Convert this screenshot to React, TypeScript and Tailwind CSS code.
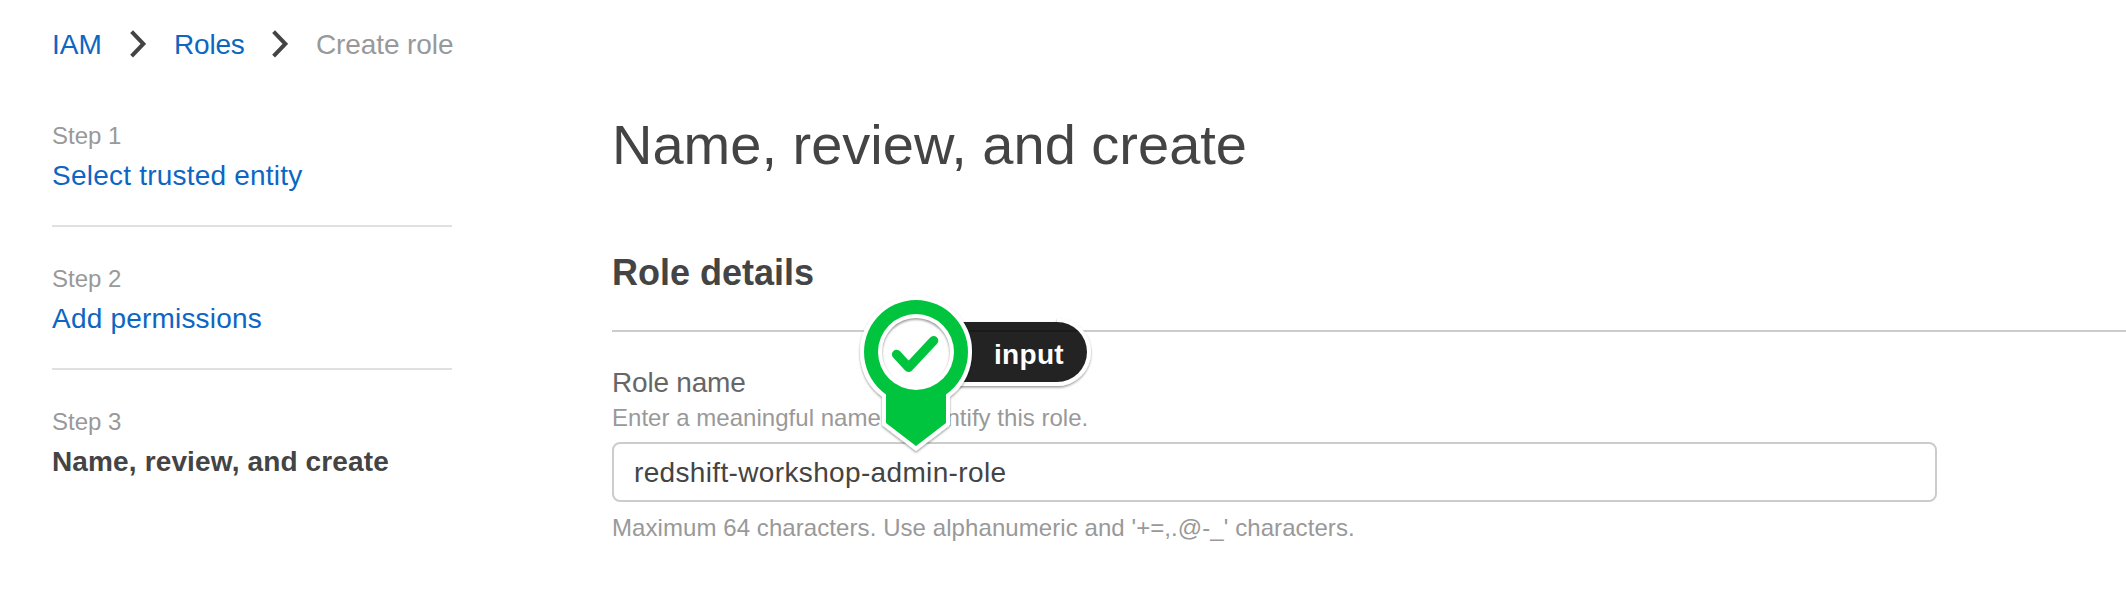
import React from "react";

const steps = [
  { label: "Step 1", title: "Select trusted entity", tracking: "tracking-[0.22px]" },
  { label: "Step 2", title: "Add permissions", tracking: "tracking-[0.2px]" },
  { label: "Step 3", title: "Name, review, and create", tracking: "tracking-[0.14px]", current: true },
];

function Chevron() {
  return (
    <svg width="16" height="28" viewBox="0 0 16 28" fill="none" stroke="#444444" strokeWidth="4" className="shrink-0">
      <path d="M1.6 1.6 L13.3 13.9 L1.6 26.2" />
    </svg>
  );
}

function InputMarker() {
  return (
    <div className="absolute left-[244px] top-[-152px] h-[168px] w-[244px]">
      <svg width="244" height="168" viewBox="858 292 244 168" className="absolute inset-0 overflow-visible">
        <defs>
          <filter id="drop" x="-20%" y="-20%" width="140%" height="140%">
            <feDropShadow dx="0" dy="1.5" stdDeviation="1" floodColor="#000" floodOpacity="0.4" />
          </filter>
          <filter id="inner" x="-20%" y="-20%" width="140%" height="140%">
            <feGaussianBlur stdDeviation="0.8" />
          </filter>
          <clipPath id="disc">
            <circle cx="916" cy="352" r="34" />
          </clipPath>
        </defs>
        <g filter="url(#drop)">
          <path d="M916 322 H1057 A30 32 0 0 1 1057 386 H916 Z" fill="#fff" />
          <path d="M1057 318 A34 34 0 0 1 1057 386 Z" fill="#fff" />
        </g>
        <path d="M916 322 H1057 A30 30 0 0 1 1057 382 H916 Z" fill="#232323" />
        <path d="M964 331 H1077" stroke="#1a1a1a" strokeWidth="2" />
        <g filter="url(#drop)">
          <path
            d="M886 394.5 A52 52 0 1 1 946 394.5 V423 L916 446 L886 423 Z"
            fill="#fff"
            stroke="#fff"
            strokeWidth="8"
            strokeLinejoin="miter"
          />
        </g>
        <path d="M886 394.5 A52 52 0 1 1 946 394.5 V423 L916 446 L886 423 Z" fill="#00c43e" />
        <circle cx="916" cy="352" r="38" fill="#fff" />
        <g clipPath="url(#disc)">
          <path
            fillRule="evenodd"
            d="M870 306 H962 V398 H870 Z M882 353.6 A34 34 0 1 0 950 353.6 A34 34 0 1 0 882 353.6 Z"
            fill="#000"
            fillOpacity="0.4"
            filter="url(#inner)"
          />
        </g>
        <path
          d="M896.6 354.4 L908.6 367.4 L933.6 340.6"
          fill="none"
          stroke="#00c43e"
          strokeWidth="9.4"
          strokeLinecap="round"
          strokeLinejoin="round"
        />
      </svg>
      <span className="absolute left-[136px] top-[43px] text-[28px] leading-[40px] font-bold tracking-[0.3px] text-white">
        input
      </span>
    </div>
  );
}

export default function App() {
  return (
    <div className="h-[602px] w-full overflow-hidden bg-white pl-[52px] font-['Liberation_Sans',Arial,sans-serif] text-[#444444]">
      <nav className="flex h-[88px] items-center text-[28px] leading-[40px] text-[#0d66c2]">
        <a className="w-[78px] pt-[2px]">IAM</a>
        <Chevron />
        <a className="ml-[28px] w-[98px] pt-[2px] tracking-[-0.2px]">Roles</a>
        <Chevron />
        <span className="ml-[28px] pt-[2px] tracking-[-0.1px] text-[#999999]">Create role</span>
      </nav>

      <div className="flex">
        <aside className="w-[400px] shrink-0 pt-[32px]">
          {steps.map((s, i) => (
            <div key={s.label} className={i < 2 ? "mb-[36px] h-[107px] border-b-2 border-[#e0e0e0]" : ""}>
              <div className="text-[24px] leading-[32px] text-[#999999]">{s.label}</div>
              <div
                className={`mt-[4px] text-[28px] leading-[40px] whitespace-nowrap ${s.tracking} ${
                  s.current ? "font-bold" : "text-[#0d66c2]"
                }`}
              >
                {s.title}
              </div>
            </div>
          ))}
        </aside>

        <main className="ml-[160px] min-w-0 flex-1 pt-[17px]">
          <h1 className="text-[56px] leading-[80px]">Name, review, and create</h1>
          <h2 className="mt-[64px] h-[83px] border-b-2 border-[#cccccc] text-[36px] leading-[48px] font-bold">
            Role details
          </h2>
          <div className="pt-[31px]">
            <label className="block h-[39px] text-[28px] leading-[40px] tracking-[-0.2px] text-[#666666]">
              Role name
            </label>
            <p className="text-[24px] leading-[32px] tracking-[0.03px] text-[#999999]">
              Enter a meaningful name to identify this role.
            </p>
            <div className="relative mt-[8px] h-[60px] w-[1325px] rounded-[8px] border-2 border-[#cccccc] pl-[20px]">
              <span className="block pt-[9px] text-[28px] leading-[40px] tracking-[0.35px]">
                redshift-workshop-admin-role
              </span>
              <InputMarker />
            </div>
            <p className="mt-[10px] text-[24px] leading-[32px] tracking-[0.075px] text-[#999999]">
              Maximum 64 characters. Use alphanumeric and '+=,.@-_' characters.
            </p>
          </div>
        </main>
      </div>
    </div>
  );
}
